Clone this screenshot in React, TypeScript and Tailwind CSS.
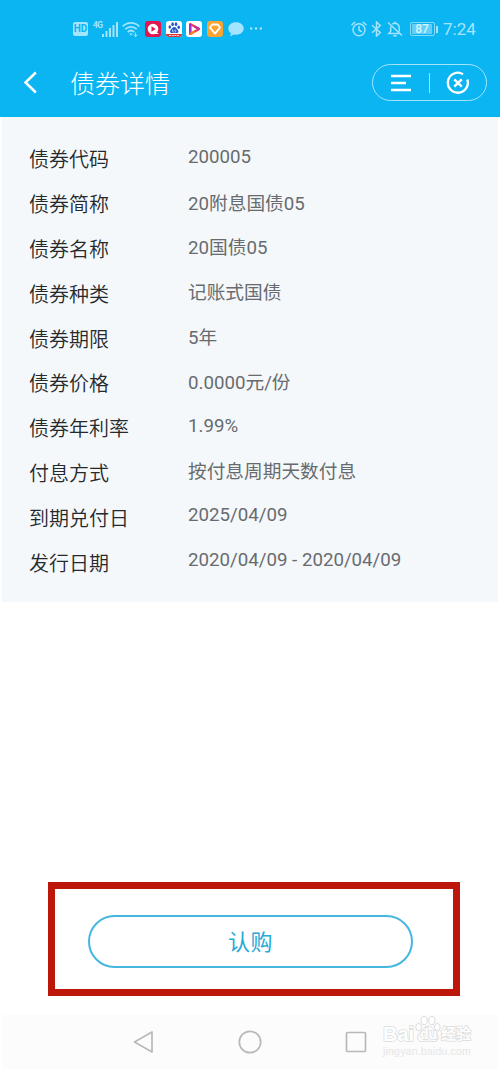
import type { ReactNode } from "react";
import clsx from "clsx";

interface BondField {
  label: string;
  value: string;
}

const fields: BondField[] = [
  { label: "债券代码", value: "200005" },
  { label: "债券简称", value: "20附息国债05" },
  { label: "债券名称", value: "20国债05" },
  { label: "债券种类", value: "记账式国债" },
  { label: "债券期限", value: "5年" },
  { label: "债券价格", value: "0.0000元/份" },
  { label: "债券年利率", value: "1.99%" },
  { label: "付息方式", value: "按付息周期天数付息" },
  { label: "到期兑付日", value: "2025/04/09" },
  { label: "发行日期", value: "2020/04/09 - 2020/04/09" },
];

function AppBadge({ className, children }: { className: string; children: ReactNode }) {
  return (
    <span className={clsx("flex h-4 w-4 items-center justify-center overflow-hidden rounded-[3px]", className)}>
      {children}
    </span>
  );
}

function StatusBar() {
  return (
    <div className="flex h-[58px] items-center pl-[73px] text-[#a5e4fd]">
      <span className="flex h-[14px] w-[15px] items-center justify-center rounded-[2px] bg-[#a5e4fd] text-[10px] leading-none font-bold text-[#0cb4f2]">
        HD
      </span>

      {/* Mobile signal */}
      <span className="-mt-2 ml-[5px] w-[9px] text-[8.5px] leading-none font-bold tracking-[-0.6px]">4G</span>
      <svg className="h-4 w-4" viewBox="0 0 16 16" fill="currentColor">
        <rect x="0" y="13" width="2" height="3" />
        <rect x="3.5" y="10" width="2" height="6" />
        <rect x="7" y="7" width="2" height="9" />
        <rect x="10.5" y="4" width="2" height="12" />
        <rect x="14" y="1" width="2" height="15" />
      </svg>

      {/* Wifi */}
      <svg className="ml-1 h-4 w-[18px]" viewBox="0 0 18 16" fill="none" stroke="currentColor" strokeWidth="1.8">
        <path d="M.7 5.3C5.4.6 12.6.6 17.3 5.3M3.3 8.2c3.3-3.2 8.1-3.2 11.4 0M5.8 11c1.9-1.8 4.5-1.8 6.4 0" />
        <path d="M7.2 12.6h3.6L9 14.8z" fill="currentColor" stroke="none" />
        <path d="M13.6 11.5v4M11.8 13.7l1.8 1.8 1.8-1.8" strokeWidth="1" />
      </svg>

      <AppBadge className="ml-[5px] bg-[#e31650]">
        <svg className="h-4 w-4" viewBox="0 0 16 16">
          <circle cx="8" cy="8" r="5.3" fill="#fff" />
          <path d="M10 10l4 3h-5z" fill="#fff" />
          <path d="M6.5 5.3l4.2 2.7-4.2 2.7z" fill="#e31650" />
        </svg>
      </AppBadge>
      <AppBadge className="ml-[5px] bg-white">
        <svg className="h-4 w-4" viewBox="0 0 16 16">
          <g fill="#2458c5">
            <ellipse cx="3.8" cy="6" rx="1.3" ry="1.8" />
            <ellipse cx="6.6" cy="3.2" rx="1.3" ry="1.9" />
            <ellipse cx="10" cy="3.2" rx="1.3" ry="1.9" />
            <ellipse cx="12.7" cy="6.2" rx="1.3" ry="1.7" />
            <path d="M8.2 5.9c1.8 0 2 1.4 3.2 2.5 2 1.8.9 4-1.1 3.6-1.6-.3-2.5-.3-4.1 0-2.2.3-2.9-2-1-3.7C6.4 7.2 6.5 5.9 8.2 5.9z" />
          </g>
          <path d="M6.5 8.5v1.8h1.2M9 8.5v1.8h1.3" fill="none" stroke="#fff" strokeWidth=".7" />
          <rect y="13" width="16" height="3" fill="#d93635" />
          <path d="M3 14.5h10" stroke="#fff" strokeWidth=".8" strokeDasharray="2 .7" />
        </svg>
      </AppBadge>
      <AppBadge className="ml-[4px] bg-white">
        <svg className="h-4 w-4" viewBox="0 0 16 16" fill="none" strokeLinejoin="round">
          <path d="M4.2 3v10l9-5z" stroke="#ef3d51" strokeWidth="2.2" />
          <path d="M4.2 3v10" stroke="#9b2fd1" strokeWidth="2.4" />
          <path d="M4.2 13l4.5-2.5" stroke="#f88620" strokeWidth="2.4" />
          <path d="M8.5 5.5l4.6 2.5" stroke="#c12bb2" strokeWidth="2" />
        </svg>
      </AppBadge>
      <AppBadge className="ml-[5px] bg-[#f9a331]">
        <svg className="h-4 w-4" viewBox="0 0 16 16" fill="none" stroke="#fff" strokeWidth="1.8" strokeLinejoin="round">
          <path d="M5.2 3.5h5.6L13 6.6 8 12.6 3 6.6z" />
        </svg>
      </AppBadge>

      <svg className="ml-[5px] h-4 w-4" viewBox="0 0 16 16" fill="currentColor">
        <path d="M8 1.3c4.3 0 7.7 2.7 7.7 6.2S12.3 13.7 8 13.7c-.8 0-1.6-.1-2.3-.3-1 .9-2.3 1.5-3.9 1.6.8-.8 1.2-1.7 1.2-2.7C1.3 11.1.3 9.4.3 7.5.3 4 3.7 1.3 8 1.3z" />
      </svg>
      <svg className="ml-[6px] h-4 w-3" viewBox="0 0 12 16" fill="currentColor">
        <circle cx="1.2" cy="7.5" r="1.2" />
        <circle cx="6" cy="7.5" r="1.2" />
        <circle cx="10.8" cy="7.5" r="1.2" />
      </svg>

      {/* Alarm, bluetooth, muted */}
      <svg className="ml-[89px] h-4 w-4" viewBox="0 0 16 16" fill="none" stroke="currentColor" strokeWidth="1.5" strokeLinecap="round">
        <circle cx="8" cy="8.7" r="6" />
        <path d="M8 5.5v3.6l2.2 1.4M1 3.7L3.7 1.2M15 3.7l-2.7-2.5" />
      </svg>
      <svg className="ml-[4px] h-4 w-[11px]" viewBox="0 0 11 16" fill="none" stroke="currentColor" strokeWidth="1.5">
        <path d="M1 4.3l8.3 7.2L5.5 15V1l3.8 3.5L1 11.7" />
      </svg>
      <svg className="ml-[5px] h-4 w-4" viewBox="0 0 16 16" fill="none" stroke="currentColor" strokeWidth="1.5">
        <path d="M1 1.5l14 13M5.3 3.2C8.5.9 12.3 3 12.3 7v3.5M3.7 5.5v5L1.8 12.6h10.5M8 .5v1.7M6.3 14.7h3.4" />
      </svg>

      {/* Battery */}
      <span className="ml-[7px] flex h-[14px] w-[25px] items-center rounded-[2px] border border-[#83d9fa] p-px">
        <span className="flex h-full w-[20px] items-center justify-center bg-[#63cff7] text-[12px] leading-none font-medium text-[#d8f4ff]">
          87
        </span>
      </span>
      <span className="ml-px h-[7px] w-[2px] bg-[#a5e4fd]" />
      <span className="ml-[5px] text-[17px] leading-none">7:24</span>
    </div>
  );
}

function TitleBar() {
  return (
    <div className="flex h-[59px] items-start pl-[23px] text-white">
      <svg className="mt-[13px] h-[23px] w-[15px]" viewBox="0 0 15 23" fill="none" stroke="currentColor" strokeWidth="2.5">
        <path d="M12.8 1.5L2.5 11.5l10.3 10" />
      </svg>
      <h1 className="ml-[32px] pt-0.5 text-[25px] leading-[50px] font-light">债券详情</h1>
      <div className="mt-[6px] ml-[202px] flex h-[37px] w-[115px] items-center rounded-full border border-[#a5e4fd]">
        <svg className="ml-[18px] h-[18px] w-5" viewBox="0 0 20 18" stroke="currentColor" strokeWidth="2.4">
          <path d="M0 2h20M0 9h15M0 16h20" />
        </svg>
        <span className="ml-[18px] h-5 w-px bg-[#a5e4fd]" />
        <svg className="ml-[16px] h-6 w-6" viewBox="0 0 24 24" fill="none" stroke="currentColor" strokeWidth="2.3">
          <path d="M17 3.2A10 10 0 1 0 21.3 8.5" />
          <path d="M8.3 8.3l7.4 7.4M15.7 8.3l-7.4 7.4" strokeWidth="2.4" />
        </svg>
      </div>
    </div>
  );
}

function Watermark() {
  return (
    <div className="ml-[16px] flex flex-col text-[#e6e6e6]">
      <div className="flex h-[29px] items-end font-['Liberation_Sans','Noto_Sans_CJK_SC',sans-serif] font-bold text-white [paint-order:stroke] [-webkit-text-stroke:1.5px_#dcdcdc]">
        <span className="w-[32px] text-[20px] leading-[19px]">Bai</span>
        <span className="relative h-[29px] w-[26px]">
          <svg className="h-full w-full [paint-order:normal]" viewBox="0 0 27 29" fill="#fff" stroke="#dadada" strokeWidth="1">
            <ellipse cx="3.8" cy="12" rx="3" ry="3.8" />
            <ellipse cx="9.5" cy="5.2" rx="3.2" ry="4.3" />
            <ellipse cx="17.5" cy="5.2" rx="3.2" ry="4.3" />
            <ellipse cx="23.2" cy="12" rx="3" ry="3.8" />
            <path d="M13.5 11c4.500 0 5.500 4 8.500 7 4.500 4.500 1.500 9.500-3 9-4-.6-7-.6-11 0C3 27.500.5 22.500 5 18 8.500 15 9 11 13.500 11z" />
          </svg>
          <span className="absolute bottom-[3px] left-[5px] text-[14px] leading-none">du</span>
        </span>
        <span className="text-[15px] leading-[20px]">经验</span>
      </div>
      <span className="mt-px font-['Liberation_Sans',sans-serif] text-[10.5px] leading-[12px] tracking-[0.2px]">
        jingyan.baidu.com
      </span>
    </div>
  );
}

export default function App() {
  return (
    <div className="flex h-[1069px] w-[500px] flex-col overflow-hidden bg-white font-['Roboto','Noto_Sans_CJK_SC',sans-serif]">
      <header className="h-[117px] bg-[#0bb5f2]">
        <StatusBar />
        <TitleBar />
      </header>

      <section className="mx-0.5 h-[485px] bg-[#f4f8fb] pt-[20px] pl-[27px]">
        {fields.map((field) => (
          <div key={field.label} className="flex h-[44.8px] items-center">
            <span className="w-[159px] pt-0.5 text-[20px] leading-[30px] font-[350] text-[#26292c]">{field.label}</span>
            <span
              className={clsx(
                "text-[18.7px] leading-[28px] text-[#686b6e]",
                /^[\d/.%\s-]+$/.test(field.value) ? "pb-[5px]" : "pb-px"
              )}
            >
              {field.value}
            </span>
          </div>
        ))}
      </section>

      <div className="mt-[280px] ml-[48px] flex h-[114px] w-[412px] items-center border-[7px] border-[#bd170b] pl-[33px]">
        <button className="mt-[5px] h-[53px] w-[325px] rounded-full border-2 border-[#45b7de] pt-0.5 text-[22px] tracking-[0.5px] text-[#25a9d6]">
          认购
        </button>
      </div>

      <nav className="mx-0.5 mt-[19px] flex h-[54px] bg-[#fcfcfc] pl-[131px]">
        <svg className="mt-[15px] h-6 w-[21px]" viewBox="0 0 21 24" fill="none" stroke="#b9b9b9" strokeWidth="1.7" strokeLinejoin="round">
          <path d="M19 2v20L1.5 12z" />
        </svg>
        <svg className="ml-[84px] mt-[15px] h-6 w-6" viewBox="0 0 24 24" fill="none" stroke="#b9b9b9" strokeWidth="1.7">
          <circle cx="12" cy="12" r="10.7" />
        </svg>
        <svg className="ml-[83px] mt-[16px] h-[22px] w-[22px]" viewBox="0 0 22 22" fill="none" stroke="#b9b9b9" strokeWidth="1.7">
          <rect x="1.5" y="1.5" width="19" height="19" rx="1" />
        </svg>
        <Watermark />
      </nav>
    </div>
  );
}
